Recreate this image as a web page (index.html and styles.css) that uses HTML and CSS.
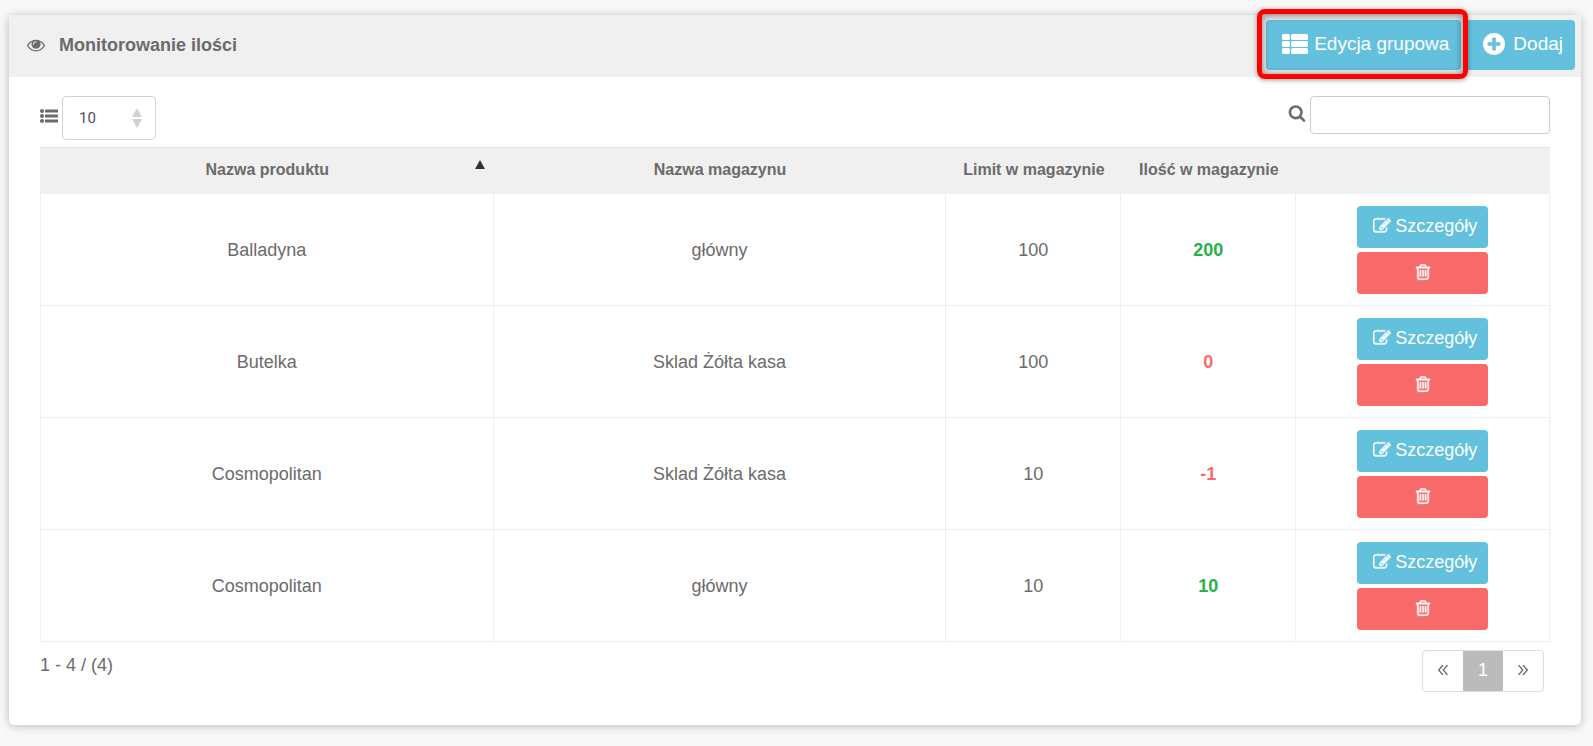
FILE: index.html
```html
<!DOCTYPE html>
<html lang="pl">
<head>
  <meta charset="UTF-8">
  <title>Monitorowanie ilości</title>
  <link rel="stylesheet" href="styles.css">
</head>
<body>
  <svg class="sprite" aria-hidden="true">
    <symbol id="i-eye" viewBox="0 0 1792 1792"><path d="M1664 960q-152-236-381-353 61 104 61 225 0 185-131.500 316.500t-316.500 131.500-316.500-131.500-131.500-316.500q0-121 61-225-229 117-381 353 133 205 333.500 326.500t434.500 121.500 434.500-121.500 333.500-326.500zm-720-384q0-20-14-34t-34-14q-125 0-214.500 89.500t-89.500 214.500q0 20 14 34t34 14 34-14 14-34q0-86 61-147t147-61q20 0 34-14t14-34zm848 384q0 34-20 69-140 230-376.500 368.500t-499.500 138.500-499.500-139-376.500-368q-20-35-20-69t20-69q140-229 376.500-368t499.500-139 499.500 139 376.500 368q20 35 20 69z"/></symbol>
    <symbol id="i-search" viewBox="0 0 1792 1792"><path d="M1216 832q0-185-131.500-316.500t-316.500-131.500-316.500 131.500-131.500 316.500 131.500 316.500 316.500 131.500 316.500-131.500 131.500-316.500zm512 832q0 52-38 90t-90 38q-54 0-90-38l-343-342q-179 124-399 124-143 0-273.500-55.500t-225-150-150-225-55.500-273.500 55.500-273.500 150-225 225-150 273.500-55.500 273.500 55.500 225 150 150 225 55.500 273.500q0 220-124 399l343 343q37 37 37 90z"/></symbol>
    <symbol id="i-plus" viewBox="128 128 1536 1536"><path d="M1344 960v-128q0-26-19-45t-45-19h-256v-256q0-26-19-45t-45-19h-128q-26 0-45 19t-19 45v256h-256q-26 0-45 19t-19 45v128q0 26 19 45t45 19h256v256q0 26 19 45t45 19h128q26 0 45-19t19-45v-256h256q26 0 45-19t19-45zm320-64q0 209-103 385.500t-279.500 279.500-385.500 103-385.500-103-279.500-279.500-103-385.500 103-385.500 279.500-279.500 385.500-103 385.500 103 279.500 279.500 103 385.500z"/></symbol>
    <symbol id="i-trash" viewBox="0 0 1792 1792"><path d="M704 736v576q0 14-9 23t-23 9h-64q-14 0-23-9t-9-23v-576q0-14 9-23t23-9h64q14 0 23 9t9 23zm256 0v576q0 14-9 23t-23 9h-64q-14 0-23-9t-9-23v-576q0-14 9-23t23-9h64q14 0 23 9t9 23zm256 0v576q0 14-9 23t-23 9h-64q-14 0-23-9t-9-23v-576q0-14 9-23t23-9h64q14 0 23 9t9 23zm128 724v-948h-896v948q0 22 7 40.500t14.500 27 10.500 8.500h832q3 0 10.500-8.500t14.500-27 7-40.500zm-672-1076h448l-48-117q-7-9-17-11h-317q-10 2-17 11zm928 32v64q0 14-9 23t-23 9h-96v948q0 83-47 143.500t-113 60.500h-832q-66 0-113-58.500t-47-141.500v-952h-96q-14 0-23-9t-9-23v-64q0-14 9-23t23-9h309l70-167q15-37 54-63t79-26h320q40 0 79 26t54 63l70 167h309q14 0 23 9t9 23z"/></symbol>
    <symbol id="i-edit" viewBox="0 0 1792 1792"><path d="M888 1184l116-116-152-152-116 116v56h96v96h56zm440-720q-16-16-33 1l-350 350q-17 17-1 33t33-1l350-350q17-17 1-33zm80 594v190q0 119-84.500 203.500t-203.500 84.500h-832q-119 0-203.500-84.500t-84.500-203.500v-832q0-119 84.500-203.500t203.500-84.500h832q63 0 117 25 15 7 18 23 3 17-9 29l-49 49q-14 14-32 8-23-6-45-6h-832q-66 0-113 47t-47 113v832q0 66 47 113t113 47h832q66 0 113-47t47-113v-126q0-13 9-22l64-64q15-15 35-7t20 29zm-96-738l288 288-672 672h-288v-288zm444 132l-92 92-288-288 92-92q28-28 68-28t68 28l152 152q28 28 28 68t-28 68z"/></symbol>
    <symbol id="i-list" viewBox="0 0 18 16"><circle cx="2" cy="3" r="2"/><circle cx="2" cy="8" r="2"/><circle cx="2" cy="13" r="2"/><rect x="5" y="1.500" width="13" height="3" rx=".5"/><rect x="5" y="6.500" width="13" height="3" rx=".5"/><rect x="5" y="11.500" width="13" height="3" rx=".5"/></symbol>
    <symbol id="i-th-list" viewBox="0 0 26 20"><rect width="8" height="6" rx="1.500"/><rect x="9" width="17" height="6" rx="1.500"/><rect y="7" width="8" height="6" rx="1.500"/><rect x="9" y="7" width="17" height="6" rx="1.500"/><rect y="14" width="8" height="6" rx="1.500"/><rect x="9" y="14" width="17" height="6" rx="1.500"/></symbol>
  </svg>

  <main class="card">
    <header class="card-header">
      <h1 class="title"><svg class="icon"><use href="#i-eye"/></svg>Monitorowanie ilości</h1>
      <div class="actions">
        <div class="highlight">
          <button class="btn btn-lg" type="button"><svg class="icon-th"><use href="#i-th-list"/></svg>Edycja grupowa</button>
        </div>
        <button class="btn btn-lg btn-add" type="button"><svg class="icon-plus"><use href="#i-plus"/></svg>Dodaj</button>
      </div>
    </header>

    <div class="card-body">
      <div class="toolbar">
        <div class="page-size">
          <label for="pageSize" aria-label="Liczba wierszy"><svg class="icon-list"><use href="#i-list"/></svg></label>
          <div class="select-box">
            <select id="pageSize">
              <option>10</option>
              <option>25</option>
              <option>50</option>
            </select>
            <svg class="select-arrows" viewBox="0 0 10 20"><path d="M5 0l5 9H0zM0 11h10l-5 9z"/></svg>
          </div>
        </div>
        <div class="search">
          <label for="search" aria-label="Szukaj"><svg class="icon"><use href="#i-search"/></svg></label>
          <input id="search" type="text">
        </div>
      </div>

      <table class="products">
        <colgroup>
          <col class="col-name">
          <col class="col-name">
          <col class="col-count">
          <col class="col-count">
          <col class="col-actions">
        </colgroup>
        <thead>
          <tr>
            <th class="sorted" aria-sort="ascending">Nazwa produktu<svg class="sort-arrow" viewBox="0 0 10 9"><path d="M5 0l5 9H0z"/></svg></th>
            <th>Nazwa magazynu</th>
            <th>Limit w magazynie</th>
            <th>Ilość w magazynie</th>
            <th></th>
          </tr>
        </thead>
        <tbody>
          <tr>
            <td>Balladyna</td>
            <td>główny</td>
            <td>100</td>
            <td class="ok">200</td>
            <td>
              <div class="row-actions">
                <button class="btn" type="button"><svg class="icon"><use href="#i-edit"/></svg>Szczegóły</button>
                <button class="btn btn-danger" type="button" aria-label="Usuń"><svg class="icon"><use href="#i-trash"/></svg></button>
              </div>
            </td>
          </tr>
          <tr>
            <td>Butelka</td>
            <td>Sklad Żółta kasa</td>
            <td>100</td>
            <td class="low">0</td>
            <td>
              <div class="row-actions">
                <button class="btn" type="button"><svg class="icon"><use href="#i-edit"/></svg>Szczegóły</button>
                <button class="btn btn-danger" type="button" aria-label="Usuń"><svg class="icon"><use href="#i-trash"/></svg></button>
              </div>
            </td>
          </tr>
          <tr>
            <td>Cosmopolitan</td>
            <td>Sklad Żółta kasa</td>
            <td>10</td>
            <td class="low">-1</td>
            <td>
              <div class="row-actions">
                <button class="btn" type="button"><svg class="icon"><use href="#i-edit"/></svg>Szczegóły</button>
                <button class="btn btn-danger" type="button" aria-label="Usuń"><svg class="icon"><use href="#i-trash"/></svg></button>
              </div>
            </td>
          </tr>
          <tr>
            <td>Cosmopolitan</td>
            <td>główny</td>
            <td>10</td>
            <td class="ok">10</td>
            <td>
              <div class="row-actions">
                <button class="btn" type="button"><svg class="icon"><use href="#i-edit"/></svg>Szczegóły</button>
                <button class="btn btn-danger" type="button" aria-label="Usuń"><svg class="icon"><use href="#i-trash"/></svg></button>
              </div>
            </td>
          </tr>
        </tbody>
      </table>

      <footer class="table-footer">
        <span class="range">1 - 4 / (4)</span>
        <nav class="pagination">
          <a href="#" aria-label="Poprzednia"><svg class="chevrons" viewBox="0 0 10 10"><path d="M5 0L.7 5 5 10M9.500 0L5.200 5l4.300 5"/></svg></a>
          <a href="#" class="active">1</a>
          <a href="#" aria-label="Następna"><svg class="chevrons" viewBox="0 0 10 10"><path d="M.5 0l4.300 5L.5 10M5 0l4.300 5L5 10"/></svg></a>
        </nav>
      </footer>
    </div>
  </main>
</body>
</html>
```
FILE: styles.css
```css
* {
  box-sizing: border-box;
}

body {
  margin: 0;
  padding: 15px 12px 20px 9px;
  font-family: "Liberation Sans", Arial, sans-serif;
  font-size: 18px;
  color: #6b6b6b;
  background: #f8f8f8;
}

svg {
  display: block;
  flex: none;
  fill: currentColor;
}

.sprite {
  position: absolute;
  width: 0;
  height: 0;
}

.icon {
  width: 18px;
  height: 18px;
}

.card {
  background: #fff;
  border-radius: 5px;
  box-shadow: 0 1px 10px rgba(0, 0, 0, 0.25);
}

.card-header {
  display: flex;
  justify-content: space-between;
  align-items: flex-start;
  height: 62px;
  padding: 5px 6px 0 18px;
  background: #f0f0f0;
}

.title {
  display: flex;
  align-items: center;
  gap: 14px;
  height: 50px;
  margin: 0;
  font-size: 18px;
}

.actions {
  display: flex;
  gap: 4px;
}

/* buttons */
.btn {
  display: flex;
  align-items: center;
  justify-content: center;
  gap: 4px;
  height: 42px;
  padding: 0 11px 2px 16px;
  border: none;
  border-radius: 4px;
  font: inherit;
  color: #fff;
  background: #64c1de;
  cursor: pointer;
}

.btn .icon {
  stroke: currentColor;
  stroke-width: 40px;
}

.btn-lg {
  gap: 6px;
  height: 50px;
  padding: 0 12px 3px 16px;
  font-size: 19px;
}

.btn-add {
  gap: 8px;
  padding-left: 18px;
}

.btn-danger {
  padding: 0 16px 2px;
  background: #f96b6b;
}

.icon-th {
  width: 26px;
  height: 20px;
}

.icon-plus {
  width: 22px;
  height: 22px;
}

/* red frame round the group edit button */
.highlight {
  position: relative;
}

.highlight::after {
  content: "";
  position: absolute;
  inset: -11px -7px -9px -9px;
  border: 5px solid #f00;
  border-radius: 8px;
  box-shadow: 0 1px 5px rgba(0, 0, 0, 0.4), inset 0 1px 6px 2px rgba(0, 0, 0, 0.35);
  pointer-events: none;
}

.card-body {
  padding: 19px 31px 33px;
}

/* toolbar */
.toolbar {
  display: flex;
  justify-content: space-between;
  align-items: flex-start;
  margin-bottom: 7px;
}

.page-size,
.search {
  display: flex;
  gap: 4px;
}

.page-size label {
  padding-top: 12px;
}

.search label {
  padding-top: 8px;
}

.icon-list {
  width: 18px;
  height: 16px;
}

.select-box {
  position: relative;
}

select {
  appearance: none;
  width: 94px;
  height: 44px;
  padding: 0 16px;
  border: 1px solid #ced4da;
  border-radius: 4px;
  font-family: Roboto, sans-serif;
  font-size: 15px;
  color: #495057;
  background: #fff;
}

.select-arrows {
  position: absolute;
  top: 12px;
  right: 14px;
  width: 10px;
  height: 20px;
  fill: #d2d2d2;
  pointer-events: none;
}

.search input {
  width: 240px;
  height: 38px;
  padding: 0 10px;
  border: 1px solid #ccc;
  border-radius: 4px;
  font: inherit;
}

/* table */
.products {
  width: 100%;
  table-layout: fixed;
  border-collapse: separate;
  border-spacing: 0;
  border-left: 1px solid #eee;
  text-align: center;
}

.col-name {
  width: 30%;
}

.col-count {
  width: 175px;
}

.products th {
  height: 47px;
  padding: 0 0 3px;
  border-top: 1px solid #e2e2e2;
  font-size: 16px;
  background: #f0f0f0;
}

.products td {
  height: 112px;
  padding: 12px 0 11px;
  border-right: 1px solid #eee;
  border-bottom: 1px solid #eee;
}

.sorted {
  position: relative;
}

.sort-arrow {
  position: absolute;
  top: 12px;
  right: 9px;
  width: 10px;
  height: 9px;
  fill: #333;
}

.products .ok {
  font-weight: bold;
  color: #28b04a;
}

.products .low {
  font-weight: bold;
  color: #f96b6b;
}

.row-actions {
  display: inline-flex;
  flex-direction: column;
  gap: 4px;
  vertical-align: top;
}

/* footer */
.table-footer {
  display: flex;
  justify-content: space-between;
  align-items: flex-start;
  padding: 8px 6px 0 0;
}

.range {
  line-height: 30px;
}

.pagination {
  display: flex;
  overflow: hidden;
  border: 1px solid #ddd;
  border-radius: 4px;
}

.pagination a {
  display: flex;
  align-items: center;
  justify-content: center;
  width: 40px;
  height: 40px;
  padding-bottom: 2px;
  color: #6b6b6b;
  text-decoration: none;
}

.pagination .active {
  color: #fff;
  background: #bbb;
}

.chevrons {
  width: 10px;
  height: 10px;
  fill: none;
  stroke: currentColor;
  stroke-width: 1.3px;
}
```
